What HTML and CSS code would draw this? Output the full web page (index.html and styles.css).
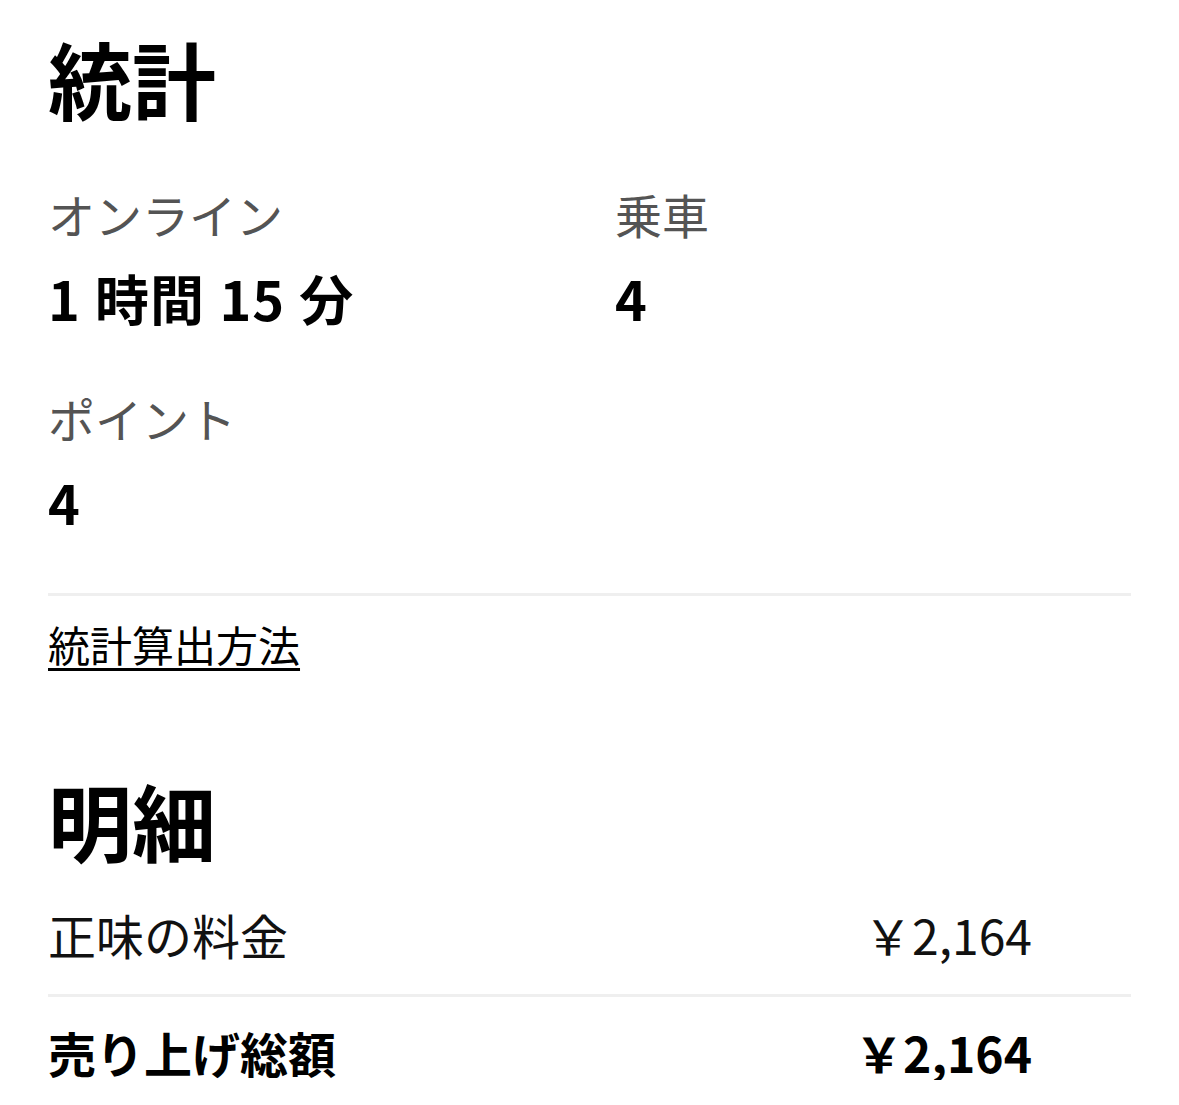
FILE: index.html
```html
<!DOCTYPE html>
<html lang="ja">
<head>
  <meta charset="UTF-8" />
  <meta name="viewport" content="width=device-width, initial-scale=1.0"/>
  <title>統計</title>
  <link rel="stylesheet" href="styles.css">
</head>
<body>
  <main class="page">
    <h1 class="section-title">統計</h1>

    <div class="stats">
      <div class="stat">
        <div class="stat-label">オンライン</div>
        <div class="stat-value">1 時間 15 分</div>
      </div>
      <div class="stat">
        <div class="stat-label">乗車</div>
        <div class="stat-value">4</div>
      </div>
      <div class="stat">
        <div class="stat-label">ポイント</div>
        <div class="stat-value">4</div>
      </div>
    </div>

    <hr class="divider stats-divider">

    <a class="link" href="#">統計算出方法</a>

    <h1 class="section-title breakdown-title">明細</h1>

    <div class="row net">
      <span>正味の料金</span>
      <span class="amount">￥2,164</span>
    </div>
    <hr class="divider">
    <div class="row total">
      <span>売り上げ総額</span>
      <span class="amount">￥2,164</span>
    </div>
  </main>
</body>
</html>
```
FILE: styles.css
```css
* {
  margin: 0;
  padding: 0;
  box-sizing: border-box;
}

body {
  background: #fff;
  color: #000;
  font-family: "Noto Sans CJK JP", "Noto Sans", sans-serif;
}

.page {
  padding: 28px 48px 0 48px;
}

.section-title {
  font-size: 84px;
  line-height: 100px;
  font-weight: 700;
}

.stats {
  display: grid;
  grid-template-columns: 567px 1fr;
  row-gap: 62px;
  margin-top: 58px;
}

.stat-label {
  font-size: 47px;
  line-height: 56px;
  color: #545454;
}

.stat-value {
  font-size: 54px;
  line-height: 60px;
  font-weight: 700;
  margin-top: 26px;
  letter-spacing: 1px;
  word-spacing: 1px;
}

.divider {
  border: none;
  height: 3px;
  background: #efefef;
}

.stats-divider {
  margin-top: 61px;
}

.link {
  display: inline-block;
  margin-top: 20px;
  font-size: 42px;
  line-height: 56px;
  color: #000;
  text-decoration: underline;
  text-decoration-thickness: 3px;
  text-underline-offset: 6px;
}

.breakdown-title {
  margin-top: 98px;
}

.row {
  display: flex;
  justify-content: space-between;
  padding-right: 99px;
  font-size: 48px;
  line-height: 56px;
  color: #111;
}

.net {
  margin-top: 36px;
  margin-bottom: 32px;
}

.total {
  margin-top: 27px;
  font-weight: 700;
  color: #000;
}
```
